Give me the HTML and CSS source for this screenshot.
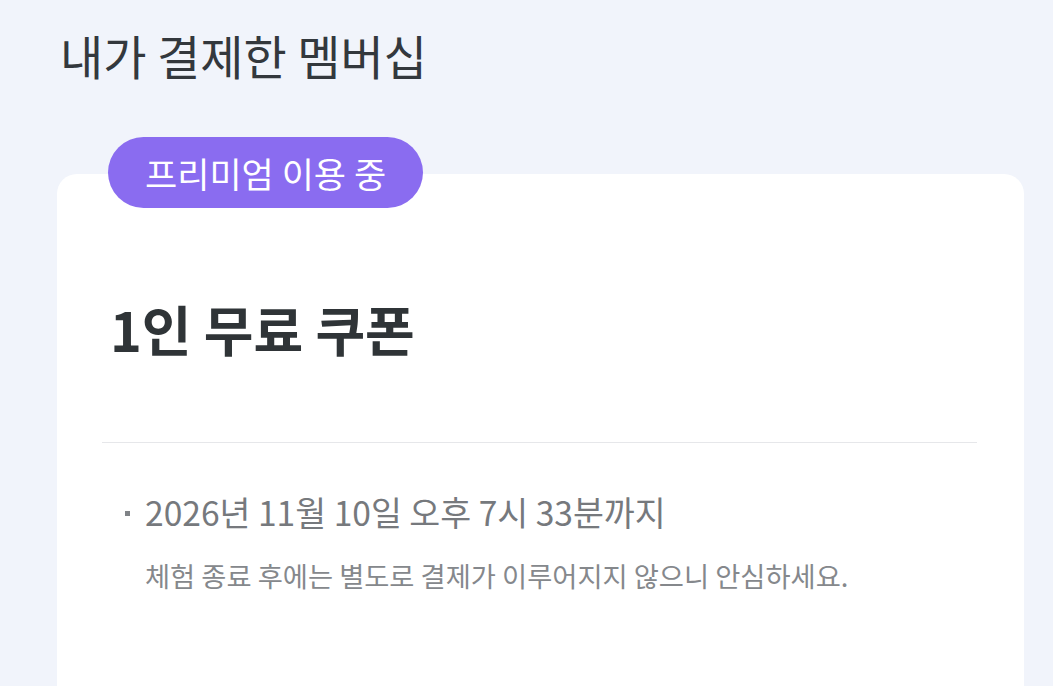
FILE: index.html
```html
<html>
<head>
<title>내가 결제한 멤버십</title>
<link rel="stylesheet" href="styles.css">
</head>
<body>

<h1 class="page-title">내가 결제한 멤버십</h1>

<div class="membership-card">
  <span class="status-badge">프리미엄 이용 중</span>
  <h2 class="plan-name">1인 무료 쿠폰</h2>
  <hr class="divider">
  <ul class="plan-info">
    <li class="expire">2026년 11월 10일 오후 7시 33분까지</li>
  </ul>
  <p class="plan-note">체험 종료 후에는 별도로 결제가 이루어지지 않으니 안심하세요.</p>
</div>

</body>
</html>
```

FILE: styles.css
```css
body {
  font-family: 'Noto Sans CJK KR', 'Noto Sans', sans-serif;
  background-color: #f1f4fb;
  margin: 0;
  padding: 0;
  overflow: hidden;
}

.page-title {
  margin: 0;
  padding: 27px 0 0 60px;
  font-size: 47px;
  font-weight: 400;
  line-height: 1.2;
  color: #33383d;
}

.membership-card {
  position: relative;
  margin: 91px 29px 0 57px;
  background-color: #fff;
  border-radius: 20px;
  padding: 123px 0 200px;
}

.status-badge {
  position: absolute;
  top: -37px;
  left: 51px;
  height: 71px;
  padding: 0 37px;
  display: flex;
  align-items: center;
  background-color: #8a6cf0;
  color: #fff;
  font-size: 35px;
  border-radius: 36px;
}

.plan-name {
  margin: 0 0 0 53px;
  font-size: 54px;
  font-weight: 700;
  line-height: 1.2;
  color: #2f3437;
}

.divider {
  margin: 80px 47px 0 45px;
  border: none;
  border-top: 1px solid #e6e7ea;
}

.plan-info {
  margin: 49px 0 0;
  padding: 0 0 0 88px;
  list-style: none;
}

.expire {
  position: relative;
  font-size: 33.6px;
  line-height: 1.2;
  color: #76797d;
}

.expire::before {
  content: '';
  position: absolute;
  left: -20px;
  top: 19px;
  width: 5px;
  height: 5px;
  background-color: #808387;
}

.plan-note {
  margin: 26px 0 0 88px;
  font-size: 27.3px;
  line-height: 1.2;
  color: #85888c;
}
```
